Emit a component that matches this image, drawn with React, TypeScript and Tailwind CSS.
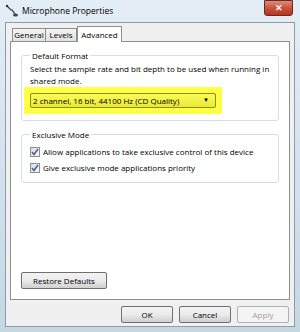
import React from 'react';

const MicIcon = () => (
  <svg width="14" height="14" viewBox="0 0 14 14">
    <path d="M2 2 L6 6 L8 6" stroke="#3a3a3a" strokeWidth="1.2" fill="none" />
    <path d="M7 6 L10 10" stroke="#555" strokeWidth="1.4" fill="none" />
    <ellipse cx="10.5" cy="11" rx="2.5" ry="1.5" fill="#444" />
    <circle cx="2" cy="2" r="1.2" fill="#333" />
  </svg>
);

const Check = () => (
  <span className="flex h-[10px] w-[10px] shrink-0 items-center justify-center border border-[#8e8f8f] bg-gradient-to-br from-[#dcdcdc] to-[#f8f8f8]">
    <svg width="8" height="8" viewBox="0 0 8 8">
      <path d="M1 4 L3 6.5 L7 1" stroke="#4a5f97" strokeWidth="1.5" fill="none" />
    </svg>
  </span>
);

const Button = ({ label, className = '', disabled = false }: { label: string; className?: string; disabled?: boolean }) => (
  <div
    className={`flex h-[17px] items-center justify-center rounded-[2px] border text-[8px] ${
      disabled
        ? 'border-[#adb2b5] bg-[#f4f4f4] text-[#a0a0a0]'
        : 'border-[#707070] bg-gradient-to-b from-[#f2f2f2] via-[#ebebeb] to-[#cfcfcf] text-black'
    } ${className}`}
  >
    {label}
  </div>
);

export default function App() {
  return (
    <div
      className="flex h-[332px] w-[300px] flex-col overflow-hidden bg-gradient-to-b from-[#e4eef6] via-[#d3e2ee] to-[#c4d8e2] px-[5px] pb-[5px]"
      style={{ fontFamily: '"Open Sans", "Noto Sans", sans-serif' }}
    >
      {/* title bar */}
      <div className="flex h-[22px] shrink-0 items-center">
        <MicIcon />
        <span className="ml-[3px] text-[8.5px] text-black">Microphone Properties</span>
        <div className="ml-auto mb-[5px] mr-[2px] flex h-[16px] w-[29px] items-center justify-center self-start rounded-b-[3px] border border-[#6b2a22] bg-gradient-to-b from-[#e08b7c] via-[#c8513e] to-[#b8321d] text-[9px] font-bold text-white">
          ✕
        </div>
      </div>

      {/* client area */}
      <div className="flex flex-1 flex-col border border-[#8f9ba6] bg-[#f0f0f0] px-[4px] pt-[3px]">
        {/* tabs */}
        <div className="flex h-[15px] items-end pl-[2px] text-[8px] text-black">
          <div className="flex h-[13px] w-[34px] items-center justify-center border border-b-0 border-[#8e8f8f] bg-gradient-to-b from-[#f4f4f4] to-[#e2e2e2]">General</div>
          <div className="flex h-[13px] w-[31px] items-center justify-center border border-b-0 border-l-0 border-[#8e8f8f] bg-gradient-to-b from-[#f4f4f4] to-[#e2e2e2]">Levels</div>
          <div className="relative z-10 -mb-px flex h-[16px] w-[45px] items-center justify-center border border-b-0 border-[#8e8f8f] bg-white">Advanced</div>
        </div>

        {/* tab panel */}
        <div className="flex h-[259px] flex-col border border-[#8e8f8f] bg-white px-[10px] pt-[8px] text-[8px] text-black">
          <fieldset className="rounded-[3px] border border-[#d5dfe5] px-[8px] pb-[6px]">
            <legend className="px-[2px] leading-[11px]">Default Format</legend>
            <p className="mt-[2px] leading-[12px]">
              Select the sample rate and bit depth to be used when running in shared mode.
            </p>
            <div className="-ml-[6px] flex h-[27px] w-[198px] items-center bg-[#ffff44] px-[6px]">
              <div className="flex h-[15px] w-full items-center rounded-[2px] border border-[#8a8a28] bg-gradient-to-b from-[#fafa5a] to-[#eaea30] pl-[2px] pr-[6px]">
                <span>2 channel, 16 bit, 44100 Hz (CD Quality)</span>
                <span className="ml-auto text-[6px]">▼</span>
              </div>
            </div>
          </fieldset>

          <fieldset className="mt-[8px] rounded-[3px] border border-[#d5dfe5] px-[8px] pb-[8px]">
            <legend className="px-[2px] leading-[11px]">Exclusive Mode</legend>
            <div className="mt-[6px] flex items-center gap-[3px] leading-[12px]">
              <Check />
              <span>Allow applications to take exclusive control of this device</span>
            </div>
            <div className="mt-[4px] flex items-center gap-[3px] leading-[12px]">
              <Check />
              <span>Give exclusive mode applications priority</span>
            </div>
          </fieldset>

          <div className="mt-auto mb-[10px]">
            <Button label="Restore Defaults" className="w-[86px]" />
          </div>
        </div>

        {/* dialog buttons */}
        <div className="flex justify-end gap-[6px] pt-[6px] pr-[1px]">
          <Button label="OK" className="w-[52px] border-[#3c7fb1] from-[#e5f4fc] via-[#c4e5f6] to-[#98d1ef]" />
          <Button label="Cancel" className="w-[52px]" />
          <Button label="Apply" className="w-[52px]" disabled />
        </div>
      </div>
    </div>
  );
}
